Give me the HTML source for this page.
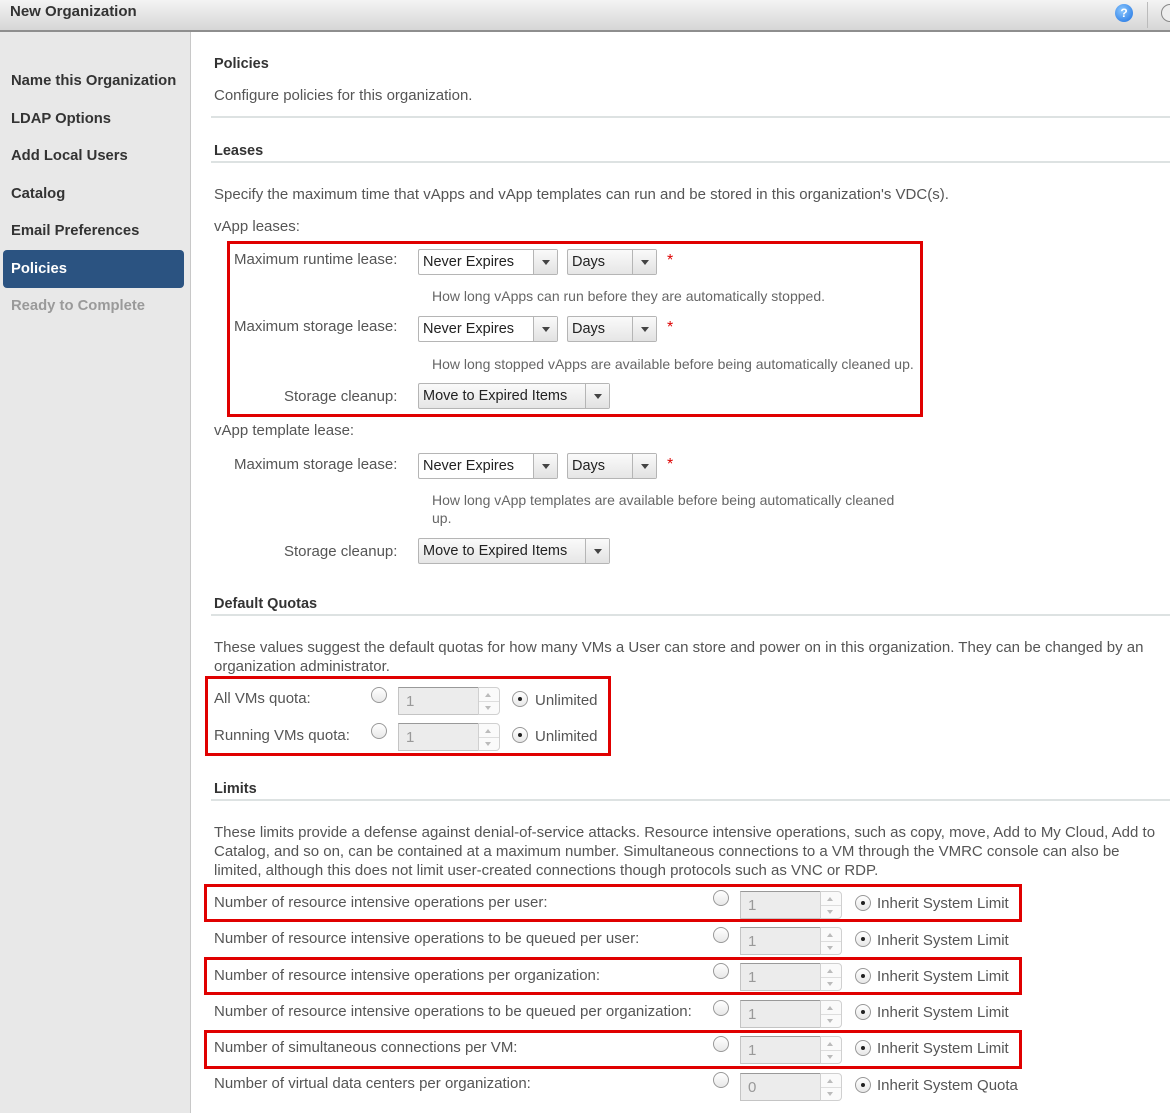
<!DOCTYPE html>
<html><head><meta charset="utf-8"><style>
*{margin:0;padding:0;box-sizing:border-box}
body{width:1170px;height:1113px;overflow:hidden;position:relative;background:#fff;font-family:"Liberation Sans",sans-serif;font-size:15px;color:#555}
.a{position:absolute;white-space:nowrap;line-height:18px;margin-top:1px}
.hdr{position:absolute;left:0;top:0;width:1170px;height:32px;background:linear-gradient(#f4f4f4,#d6d6d6);border-bottom:2px solid #8e8e8e}
.side{position:absolute;left:0;top:32px;width:191px;height:1081px;background:#e8e8e8;border-right:1px solid #c8c8c8}
.nav{position:absolute;left:11px;font-weight:bold;font-size:14.8px;color:#333;line-height:18px;white-space:nowrap;margin-top:1px}
.hl{position:absolute;left:211px;right:0;height:2px;background:#dde2e2}
.h{font-weight:bold;color:#333;font-size:14.5px}
.sel{position:absolute;height:26px;border:1px solid #b5b5b5;border-radius:2px;background:#fff;padding:3px 4px;line-height:18px;color:#222;font-size:14.5px}
.sel.g{background:linear-gradient(#fafafa,#e6e6e6)}
.sel .b{position:absolute;right:0;top:0;width:24px;height:24px;border-left:1px solid #b5b5b5;background:linear-gradient(#fafafa,#e2e2e2)}
.sel .b:after{content:"";position:absolute;left:8px;top:10px;border-left:4px solid transparent;border-right:4px solid transparent;border-top:5px solid #444}
.ast{position:absolute;color:#d00;font-size:16px}
.rb{position:absolute;border:3px solid #e00000}
.r{position:absolute;width:16px;height:16px;border-radius:50%;border:1px solid #999;background:linear-gradient(#fff,#e8e8e8)}
.r.on:after{content:"";position:absolute;left:5px;top:5px;width:4px;height:4px;border-radius:50%;background:#222}
.in{position:absolute;width:82px;height:28px;border:1px solid #c4c4c4;border-top-color:#999;background:#ececec;color:#999;padding:5px 7px;line-height:18px}
.sp{position:absolute;width:22px;height:28px;border:1px solid #d0d0d0;border-radius:0 4px 4px 0;background:#fafafa}
.sp:before{content:"";position:absolute;left:6px;top:5px;border-left:3px solid transparent;border-right:3px solid transparent;border-bottom:4px solid #bbb}
.sp:after{content:"";position:absolute;left:6px;top:18px;border-left:3px solid transparent;border-right:3px solid transparent;border-top:4px solid #bbb}
.sp i{position:absolute;left:0;right:0;top:13px;border-top:1px solid #ddd}
.hint{color:#666;font-size:14px}
</style></head><body>
<div class="hdr"><div class="a" style="left:10px;top:2px;font-weight:bold;font-size:15px;color:#333">New Organization</div>
<div style="position:absolute;left:1115px;top:4px;width:18px;height:18px;border-radius:50%;background:radial-gradient(circle at 40% 35%,#8cc8ff,#1a6fe0);color:#fff;font-size:12px;font-weight:bold;text-align:center;line-height:18px">?</div>
<div style="position:absolute;left:1147px;top:2px;width:1px;height:26px;background:#bbb"></div>
<div style="position:absolute;left:1161px;top:4px;width:18px;height:18px;border-radius:50%;border:1px solid #888;background:#eee"></div></div>
<div class="side">
<div class="nav" style="top:39px">Name this Organization</div>
<div class="nav" style="top:77px">LDAP Options</div>
<div class="nav" style="top:114px">Add Local Users</div>
<div class="nav" style="top:152px">Catalog</div>
<div class="nav" style="top:189px">Email Preferences</div>
<div style="position:absolute;left:3px;top:218px;width:181px;height:38px;background:#2b5381;border-radius:4px"></div>
<div class="nav" style="top:227px;color:#fff">Policies</div>
<div class="nav" style="top:264px;color:#9a9a9a">Ready to Complete</div>
</div>

<div class="a h" style="left:214px;top:54px">Policies</div>
<div class="a" style="left:214px;top:86px">Configure policies for this organization.</div>
<div class="hl" style="top:116px"></div>
<div class="a h" style="left:214px;top:141px">Leases</div>
<div class="hl" style="top:161px"></div>
<div class="a" style="left:214px;top:185px">Specify the maximum time that vApps and vApp templates can run and be stored in this organization's VDC(s).</div>
<div class="a" style="left:214px;top:217px">vApp leases:</div>

<div class="a" style="left:234px;top:250px">Maximum runtime lease:</div>
<div class="sel" style="left:418px;top:249px;width:140px">Never Expires<div class="b"></div></div>
<div class="sel g" style="left:567px;top:249px;width:90px">Days<div class="b"></div></div>
<div class="ast" style="left:667px;top:252px">*</div>
<div class="a hint" style="left:432px;top:286px">How long vApps can run before they are automatically stopped.</div>
<div class="a" style="left:234px;top:317px">Maximum storage lease:</div>
<div class="sel" style="left:418px;top:316px;width:140px">Never Expires<div class="b"></div></div>
<div class="sel g" style="left:567px;top:316px;width:90px">Days<div class="b"></div></div>
<div class="ast" style="left:667px;top:319px">*</div>
<div class="a hint" style="left:432px;top:354px">How long stopped vApps are available before being automatically cleaned up.</div>
<div class="a" style="left:284px;top:387px">Storage cleanup:</div>
<div class="sel g" style="left:418px;top:383px;width:192px">Move to Expired Items<div class="b"></div></div>
<div class="rb" style="left:227px;top:241px;width:696px;height:176px"></div>

<div class="a" style="left:214px;top:421px">vApp template lease:</div>
<div class="a" style="left:234px;top:455px">Maximum storage lease:</div>
<div class="sel" style="left:418px;top:453px;width:140px">Never Expires<div class="b"></div></div>
<div class="sel g" style="left:567px;top:453px;width:90px">Days<div class="b"></div></div>
<div class="ast" style="left:667px;top:456px">*</div>
<div class="a hint" style="left:432px;top:490px">How long vApp templates are available before being automatically cleaned</div>
<div class="a hint" style="left:432px;top:508px">up.</div>
<div class="a" style="left:284px;top:542px">Storage cleanup:</div>
<div class="sel g" style="left:418px;top:538px;width:192px">Move to Expired Items<div class="b"></div></div>

<div class="a h" style="left:214px;top:594px">Default Quotas</div>
<div class="hl" style="top:614px"></div>
<div class="a" style="left:214px;top:638px">These values suggest the default quotas for how many VMs a User can store and power on in this organization. They can be changed by an</div>
<div class="a" style="left:214px;top:657px">organization administrator.</div>
<div class="a" style="left:214px;top:689px">All VMs quota:</div>
<div class="r" style="left:371px;top:687px"></div>
<div class="in" style="left:398px;top:687px">1</div><div class="sp" style="left:478px;top:687px"><i></i></div>
<div class="r on" style="left:512px;top:691px"></div>
<div class="a" style="left:535px;top:691px">Unlimited</div>
<div class="a" style="left:214px;top:726px">Running VMs quota:</div>
<div class="r" style="left:371px;top:723px"></div>
<div class="in" style="left:398px;top:723px">1</div><div class="sp" style="left:478px;top:723px"><i></i></div>
<div class="r on" style="left:512px;top:727px"></div>
<div class="a" style="left:535px;top:727px">Unlimited</div>
<div class="rb" style="left:205px;top:676px;width:406px;height:80px"></div>

<div class="a h" style="left:214px;top:779px">Limits</div>
<div class="hl" style="top:799px"></div>
<div class="a" style="left:214px;top:823px">These limits provide a defense against denial-of-service attacks. Resource intensive operations, such as copy, move, Add to My Cloud, Add to</div>
<div class="a" style="left:214px;top:842px">Catalog, and so on, can be contained at a maximum number. Simultaneous connections to a VM through the VMRC console can also be</div>
<div class="a" style="left:214px;top:861px">limited, although this does not limit user-created connections though protocols such as VNC or RDP.</div>

<div class="a" style="left:214px;top:893px">Number of resource intensive operations per user:</div>
<div class="r" style="left:713px;top:890px"></div><div class="in" style="left:740px;top:891px">1</div><div class="sp" style="left:820px;top:891px"><i></i></div>
<div class="r on" style="left:855px;top:895px"></div><div class="a" style="left:877px;top:894px">Inherit System Limit</div>

<div class="a" style="left:214px;top:929px">Number of resource intensive operations to be queued per user:</div>
<div class="r" style="left:713px;top:927px"></div><div class="in" style="left:740px;top:927px">1</div><div class="sp" style="left:820px;top:927px"><i></i></div>
<div class="r on" style="left:855px;top:931px"></div><div class="a" style="left:877px;top:931px">Inherit System Limit</div>

<div class="a" style="left:214px;top:966px">Number of resource intensive operations per organization:</div>
<div class="r" style="left:713px;top:963px"></div><div class="in" style="left:740px;top:963px">1</div><div class="sp" style="left:820px;top:963px"><i></i></div>
<div class="r on" style="left:855px;top:968px"></div><div class="a" style="left:877px;top:967px">Inherit System Limit</div>

<div class="a" style="left:214px;top:1002px">Number of resource intensive operations to be queued per organization:</div>
<div class="r" style="left:713px;top:1000px"></div><div class="in" style="left:740px;top:1000px">1</div><div class="sp" style="left:820px;top:1000px"><i></i></div>
<div class="r on" style="left:855px;top:1004px"></div><div class="a" style="left:877px;top:1003px">Inherit System Limit</div>

<div class="a" style="left:214px;top:1038px">Number of simultaneous connections per VM:</div>
<div class="r" style="left:713px;top:1036px"></div><div class="in" style="left:740px;top:1036px">1</div><div class="sp" style="left:820px;top:1036px"><i></i></div>
<div class="r on" style="left:855px;top:1040px"></div><div class="a" style="left:877px;top:1039px">Inherit System Limit</div>

<div class="a" style="left:214px;top:1074px">Number of virtual data centers per organization:</div>
<div class="r" style="left:713px;top:1072px"></div><div class="in" style="left:740px;top:1073px">0</div><div class="sp" style="left:820px;top:1073px"><i></i></div>
<div class="r on" style="left:855px;top:1077px"></div><div class="a" style="left:877px;top:1076px">Inherit System Quota</div>

<div class="rb" style="left:204px;top:884px;width:818px;height:38px"></div>
<div class="rb" style="left:204px;top:957px;width:818px;height:38px"></div>
<div class="rb" style="left:204px;top:1030px;width:818px;height:39px"></div>
</body></html>
